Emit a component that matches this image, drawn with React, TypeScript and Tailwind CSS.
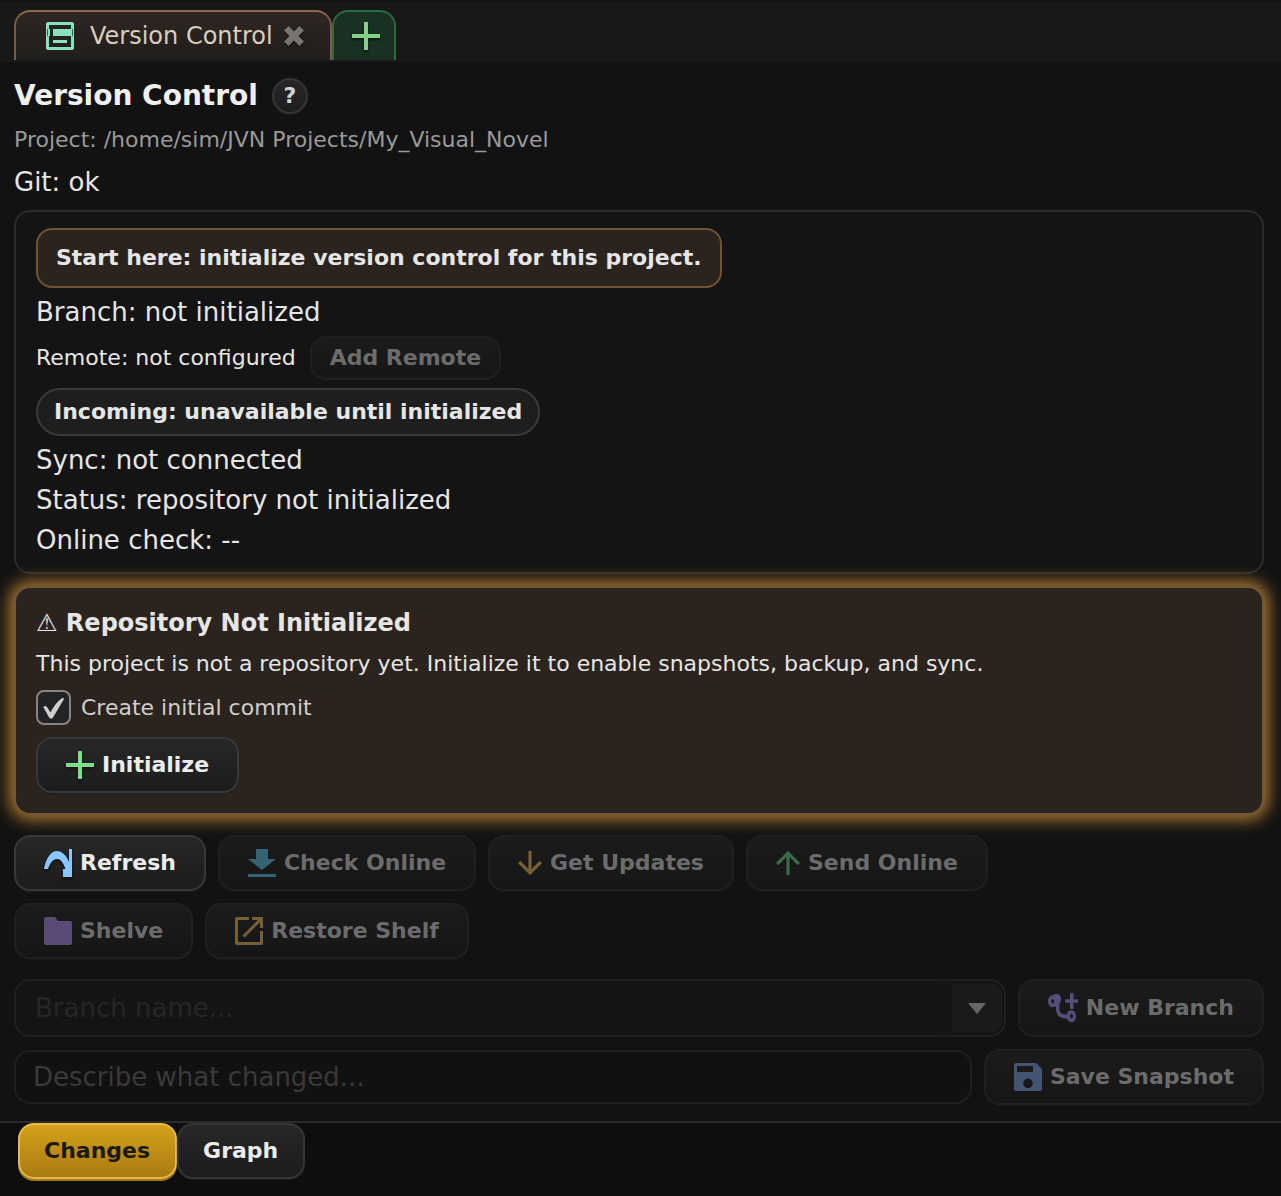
import React, { useState } from 'react';
import { clsx } from 'clsx';

type IconProps = { className?: string };

const PanelIcon = () => (
    <svg viewBox="0 0 28 28" className="w-7 h-7 shrink-0" fill="#86e3bd" aria-hidden="true">
        <path fillRule="evenodd" d="M2 0h24a2 2 0 0 1 2 2v24a2 2 0 0 1-2 2H2a2 2 0 0 1-2-2V2a2 2 0 0 1 2-2ZM3 3v22h22V3Z" />
        <path d="M7 7h18v7H7ZM7 18h14v3H7ZM3 7h1v7H3Z" />
        <path d="M1 7h1v7H1ZM26 7h1v7h-1Z" fill="#2a2521" fillOpacity="0.7" />
    </svg>
);

const CloseIcon = () => (
    <svg viewBox="0 0 20 20" className="w-5 h-5 drop-shadow-[0_1px_1px_rgba(0,0,0,0.6)]" fill="#777472" aria-hidden="true">
        <path d="M4.500 0 10 5.500 15.500 0 20 4.500 14.500 10 20 15.500 15.500 20 10 14.500 4.500 20 0 15.500 5.500 10 0 4.500Z" />
    </svg>
);

const PlusIcon = ({ className }: IconProps) => (
    <svg viewBox="0 0 28 28" className={clsx('w-7 h-7 shrink-0 drop-shadow-[0_2px_1px_rgba(0,0,0,0.5)]', className)} fill="currentColor" aria-hidden="true">
        <path d="M12 0h4v12h12v4H16v12h-4V16H0v-4h12Z" />
    </svg>
);

const RefreshIcon = () => (
    <svg viewBox="0 0 28 28" className="w-7 h-7 shrink-0 text-[#8ac6ff] drop-shadow-[0_2px_1px_rgba(0,0,0,0.5)]" fill="currentColor" aria-hidden="true">
        <path d="M0 20C2 9 7 2 13 2c5 0 9 4 12 11V0h3v28h-9v-8h2.500C19 13 16.500 10 13 10c-4 0-7 4-9 10Z" />
    </svg>
);

const DownloadIcon = () => (
    <svg viewBox="0 0 28 28" className="w-7 h-7 shrink-0 text-[#356374]" fill="currentColor" aria-hidden="true">
        <path d="M8 0h12v10h8L14 21 0 10h8ZM0 25h28v3H0Z" />
    </svg>
);

const ArrowIcon = ({ className }: IconProps) => (
    <svg viewBox="0 0 24 24" className={clsx('w-6 h-6 shrink-0', className)} fill="none" stroke="currentColor" strokeWidth="3.200" aria-hidden="true">
        <path d="M12 0v22M1.200 11 12 21.800 22.800 11" />
    </svg>
);

const FolderIcon = () => (
    <svg viewBox="0 0 28 28" className="w-7 h-7 shrink-0 text-[#5b4a76]" fill="currentColor" aria-hidden="true">
        <path d="M2 0h9l3 4h12a2 2 0 0 1 2 2v20a2 2 0 0 1-2 2H2a2 2 0 0 1-2-2V2a2 2 0 0 1 2-2Z" />
    </svg>
);

const OpenIcon = () => (
    <svg viewBox="0 0 28 28" className="w-7 h-7 shrink-0 text-[#75603a]" fill="currentColor" aria-hidden="true">
        <path d="M14 0v3H3v22h22V14h3v12a2 2 0 0 1-2 2H2a2 2 0 0 1-2-2V2a2 2 0 0 1 2-2Z" />
        <path d="M17 0h11v11h-3V5.200L9.500 20.500 7.500 18.500 22.800 3H17Z" />
    </svg>
);

const BranchIcon = () => (
    <svg viewBox="0 0 30 30" className="w-[30px] h-[30px] shrink-0 text-[#564d78]" fill="currentColor" aria-hidden="true">
        <path
            fillRule="evenodd"
            d="M4.700 2.300Q6 1 8.500 1C11.500 1 13 3 13 6q0 3-1.500 5v4.500c0 4.500 2.500 6 7 6.200.6-2.600 2.400-4.500 4.900-4.500 2.800 0 4.600 2.600 4.600 6s-1.800 6-4.600 6c-2.200 0-3.700-1.400-4.400-3.600C11.500 25.500 8 22 8 15.500v-2.200Q6.500 14.300 4.700 14.300C2 14.300 0 11.600 0 8.300s2-6 4.700-6ZM4.700 6.200c-.9 0-1.500.9-1.500 2.100s.6 2.100 1.500 2.100 1.500-.9 1.500-2.100-.6-2.100-1.500-2.100ZM23.400 21.100c-.9 0-1.500.9-1.500 2.100s.6 2.100 1.500 2.100 1.500-.9 1.500-2.100-.6-2.100-1.500-2.100Z"
        />
        <path d="M22 0h3.500v6.300H30v3.500h-4.500V16H22V9.800h-4.700V6.300H22Z" />
    </svg>
);

const SaveIcon = () => (
    <svg viewBox="0 0 28 28" className="w-7 h-7 shrink-0 text-[#445473]" fill="currentColor" aria-hidden="true">
        <path fillRule="evenodd" d="M2 0h20l6 6v20a2 2 0 0 1-2 2H2a2 2 0 0 1-2-2V2a2 2 0 0 1 2-2ZM3 3v6h16V3ZM14 15.500a4.800 4.800 0 1 0 0 9.600 4.800 4.800 0 0 0 0-9.600Z" />
    </svg>
);

interface ActionProps {
    label: string;
    icon: React.ReactNode;
    disabled?: boolean;
}

const ActionButton: React.FC<ActionProps> = ({ label, icon, disabled }) => (
    <button
        type="button"
        disabled={disabled}
        className={clsx(
            'flex items-center gap-2 shrink-0 min-h-14 px-7 rounded-2xl border-2 bg-linear-to-b text-[22px] leading-7 font-bold whitespace-nowrap',
            disabled
                ? 'border-[#202020] from-[#1b1b1b] to-[#161616] text-[#6c6c6c] shadow-[0_1px_1px_#191919]'
                : 'border-[#383838] from-[#272727] to-[#1c1c1c] text-[#ececec] shadow-[0_1px_1px_#202020]',
        )}
    >
        {icon}
        {label}
    </button>
);

export default function App() {
    const [initialCommit, setInitialCommit] = useState(true);
    const [view, setView] = useState('Changes');

    return (
        <div className="min-h-screen flex flex-col bg-[#121212] text-[#e6e6e6] font-['DejaVu_Sans',sans-serif] text-[22px] leading-7">
            {/* Editor tabs */}
            <header className="flex items-end h-[62px] px-3.5 pb-0.5 bg-[#181818] border-t-2 border-[#121212]">
                <div className="flex items-center h-[50px] pl-[30px] pr-[26px] rounded-t-2xl border-2 border-b-0 border-[#7d5b43] border-t-[#8f6a4d] bg-linear-to-b from-[#2e2723] to-[#211d1a]">
                    <PanelIcon />
                    <span className="ml-4 mr-[11px] text-2xl leading-7 text-[#d9cdc0]">Version Control</span>
                    <button type="button" aria-label="Close tab">
                        <CloseIcon />
                    </button>
                </div>
                <button
                    type="button"
                    aria-label="New tab"
                    className="flex items-center h-[50px] pl-[18px] pr-3.5 rounded-t-2xl border-2 border-b-0 border-[#2b6b3f] bg-[#1a3022] text-[#86cf86]"
                >
                    <PlusIcon />
                </button>
            </header>

            <main className="flex flex-col gap-3 pt-4 pb-4 pl-3.5 pr-[17px]">
                <div className="flex items-center gap-3.5">
                    <h1 className="text-[28px] leading-9 font-bold text-[#f0f0f0]">Version Control</h1>
                    <button
                        type="button"
                        aria-label="Help"
                        className="flex items-center justify-center w-9 h-9 rounded-full border-2 border-[#353535] bg-linear-to-b from-[#272727] to-[#1e1e1e] font-bold text-[#d2d2d2] shadow-[0_1px_1px_#202020]"
                    >
                        ?
                    </button>
                </div>
                <p className="text-[#9a9a9a]">Project: /home/sim/JVN Projects/My_Visual_Novel</p>
                <p className="text-[26px] leading-8">Git: ok</p>

                {/* Repository summary */}
                <section className="flex flex-col items-start gap-2 px-5 py-4 rounded-2xl border-2 border-[#2b2b2b] bg-[#141414] text-[26px] leading-8">
                    <p className="px-[18px] py-3.5 rounded-2xl border-2 border-[#705433] bg-[#2b241e] text-[22px] leading-7 font-bold">
                        Start here: initialize version control for this project.
                    </p>
                    <p>Branch: not initialized</p>
                    <div className="flex items-center gap-3.5 text-[22px] leading-7">
                        <span>Remote: not configured</span>
                        <button
                            type="button"
                            disabled
                            className="px-[18px] py-1.5 rounded-2xl border-2 border-[#202020] bg-linear-to-b from-[#1b1b1b] to-[#161616] font-bold text-[#6c6c6c]"
                        >
                            Add Remote
                        </button>
                    </div>
                    <p className="px-4 py-2 rounded-full border-2 border-[#3a3a3a] bg-[#1e1e1e] text-[22px] leading-7 font-bold">
                        Incoming: unavailable until initialized
                    </p>
                    <p>Sync: not connected</p>
                    <p>Status: repository not initialized</p>
                    <p>Online check: --</p>
                </section>

                {/* Init card */}
                <section className="flex flex-col items-start gap-3 p-5 rounded-2xl border-2 border-[#705738] bg-[#2b241e] shadow-[0_0_16px_5px_#a8762f]">
                    <h2 className="text-2xl leading-[30px] font-bold">⚠ Repository Not Initialized</h2>
                    <p>This project is not a repository yet. Initialize it to enable snapshots, backup, and sync.</p>
                    <label className="flex items-center gap-2.5 text-[#cfcfcf]">
                        <span className="grid w-[35px] h-[35px]">
                            <input
                                type="checkbox"
                                checked={initialCommit}
                                onChange={e => setInitialCommit(e.target.checked)}
                                className="col-start-1 row-start-1 appearance-none w-full h-full rounded-lg border-2 border-[#858585] bg-[#232323]"
                            />
                            {initialCommit && (
                                <svg viewBox="0 0 35 35" className="col-start-1 row-start-1 pointer-events-none" fill="#cfcfcf" aria-hidden="true">
                                    <path d="M7.500 17.500c-.3-1.400 2.200-2.500 3.500-.5l3.500 5.500C17.500 16.500 21.500 11 26 8.200c1.500-.7 2.300 0 1.700 1.300L17 27.500c-.8 1.600-3 1.600-3.800 0Z" />
                                </svg>
                            )}
                        </span>
                        Create initial commit
                    </label>
                    <ActionButton label="Initialize" icon={<PlusIcon className="text-[#7fdc8c]" />} />
                </section>

                <div className="flex flex-wrap gap-3 mt-2">
                    <ActionButton label="Refresh" icon={<RefreshIcon />} />
                    <ActionButton label="Check Online" icon={<DownloadIcon />} disabled />
                    <ActionButton label="Get Updates" icon={<ArrowIcon className="text-[#75603a]" />} disabled />
                    <ActionButton label="Send Online" icon={<ArrowIcon className="rotate-180 text-[#3b6b49]" />} disabled />
                    <div className="flex flex-wrap gap-3 w-full">
                        <ActionButton label="Shelve" icon={<FolderIcon />} disabled />
                        <ActionButton label="Restore Shelf" icon={<OpenIcon />} disabled />
                    </div>
                </div>

                <div className="flex gap-3 mt-2">
                    <div className="flex flex-1 min-w-0 h-[58px] p-0.5 rounded-2xl border-2 border-[#202020] bg-[#141414]">
                        <input
                            type="text"
                            disabled
                            aria-label="Branch name"
                            placeholder="Branch name..."
                            className="flex-1 min-w-0 px-[15px] rounded-2xl border-2 border-[#161616] bg-[#141414] text-[26px] leading-8 placeholder:text-[#262626]"
                        />
                        <button type="button" disabled aria-label="Show branches" className="flex items-center justify-center w-[50px] rounded-r-xl bg-[#1a1a1a]">
                            <svg viewBox="0 0 18 11" className="w-[18px] h-[11px]" fill="#666" aria-hidden="true">
                                <path d="M0 0h18L9 11Z" />
                            </svg>
                        </button>
                    </div>
                    <ActionButton label="New Branch" icon={<BranchIcon />} disabled />
                </div>

                <div className="flex items-center gap-3">
                    <input
                        type="text"
                        disabled
                        aria-label="Snapshot description"
                        placeholder="Describe what changed..."
                        className="flex-1 min-w-0 h-[54px] px-[17px] rounded-2xl border-2 border-[#1f1f1f] bg-[#111111] text-[26px] leading-8 placeholder:text-[#3a3a3a]"
                    />
                    <ActionButton label="Save Snapshot" icon={<SaveIcon />} disabled />
                </div>
            </main>

            {/* Bottom view switch */}
            <nav className="flex flex-1 items-start px-[18px] border-t-2 border-[#2a2a2a] bg-[#0e0e0e]">
                {['Changes', 'Graph'].map(name => (
                    <button
                        key={name}
                        type="button"
                        onClick={() => setView(name)}
                        className={clsx(
                            'h-14 pl-6 pr-[25px] rounded-2xl border-2 bg-linear-to-b font-bold',
                            view === name
                                ? 'border-[#e6bb4d] from-[#d5a219] to-[#a97a13] text-[#1c1a17] shadow-[0_2px_0_#a97a13]'
                                : 'border-[#363636] from-[#272727] to-[#1c1c1c] text-[#ececec] shadow-[0_1px_1px_#202020]',
                        )}
                    >
                        {name}
                    </button>
                ))}
            </nav>
        </div>
    );
}
